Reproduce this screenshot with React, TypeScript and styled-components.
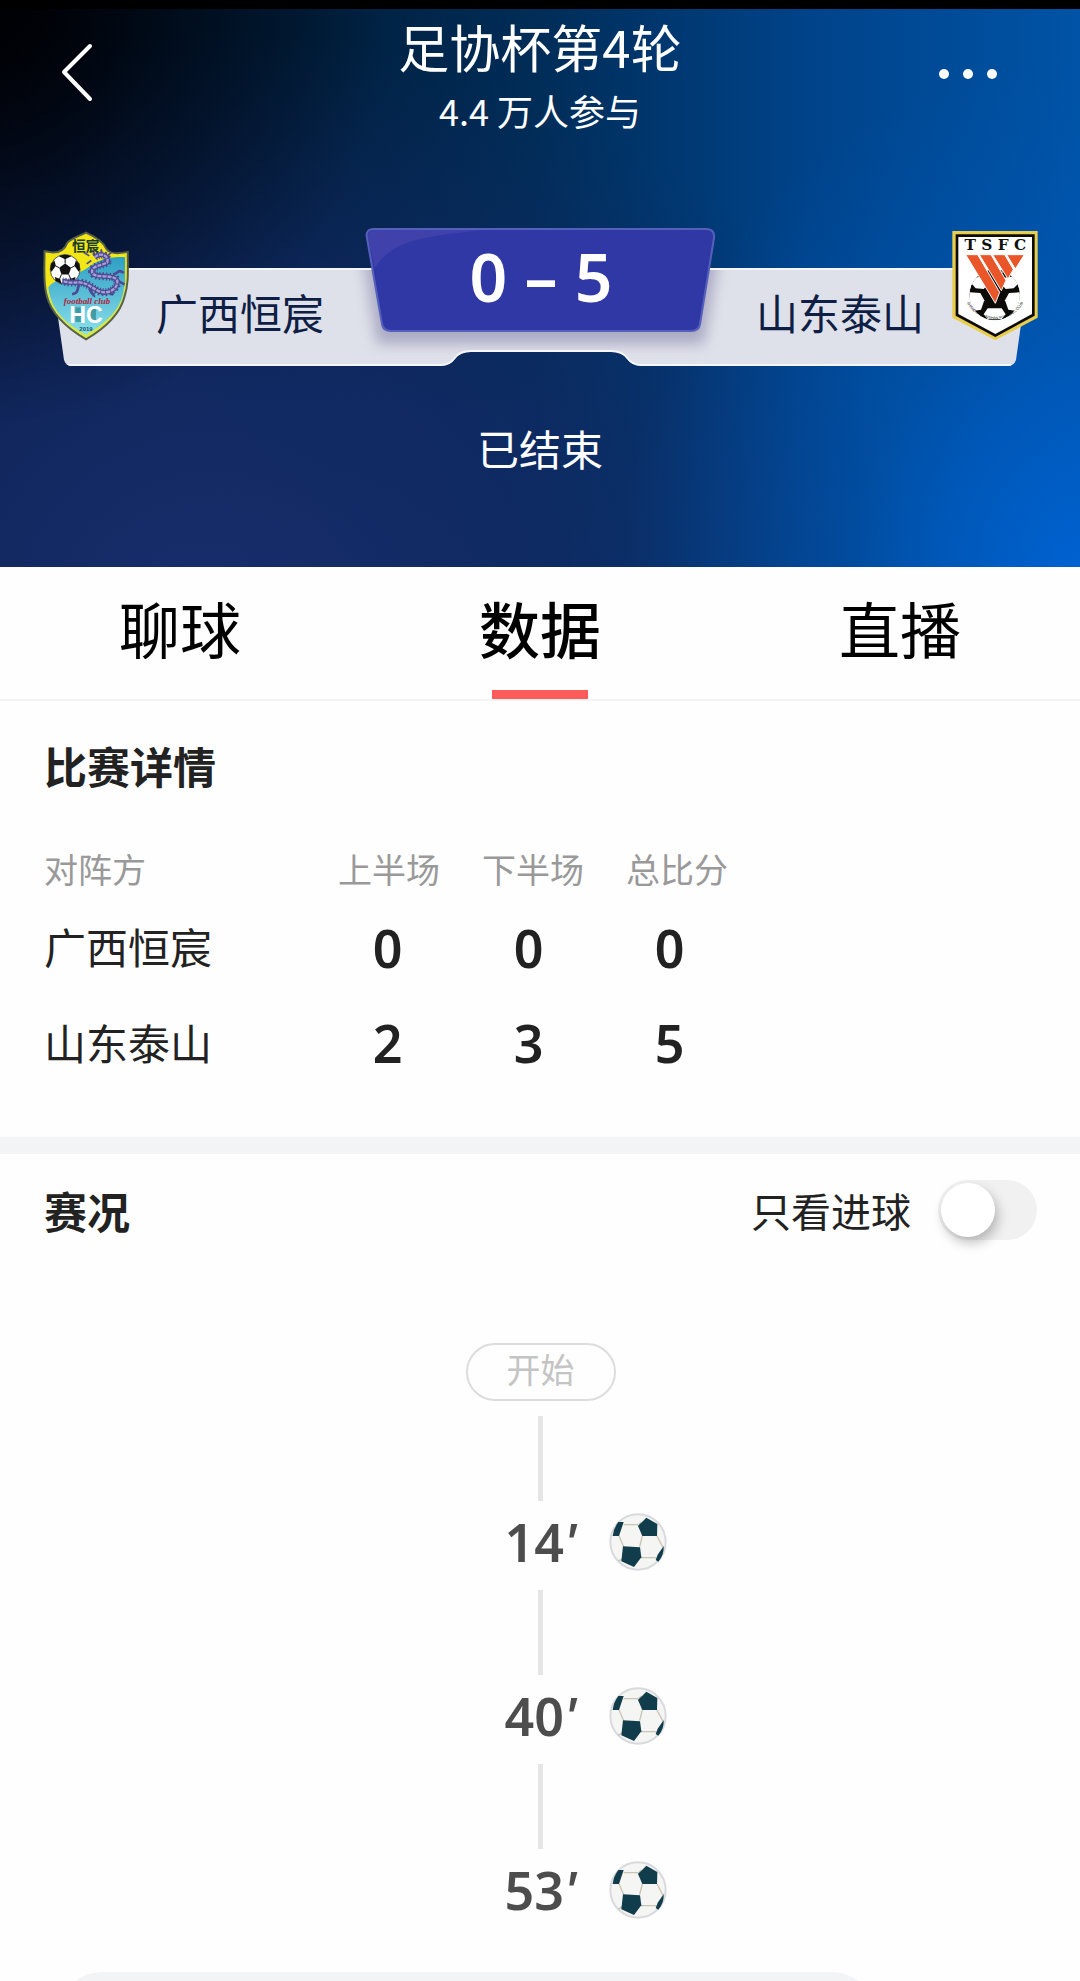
import React, { useState } from 'react'
import styled, { createGlobalStyle } from 'styled-components'

const tabs = ['聊球', '数据', '直播']

const scores = [
  { team: '广西恒宸', points: [0, 0, 0] },
  { team: '山东泰山', points: [2, 3, 5] },
]

const goals = ['14', '40', '53']

const HomeCrest = () => (
  <CrestSvg viewBox="36 33 264 332" role="img" aria-label="广西恒宸">
    <defs>
      <clipPath id="homeShield">
        <path d="M168 38 C146 48 122 56 112 68 C106 84 94 98 68 98 L43 94 C43 150 38 190 50 230 C64 284 110 326 168 360 C226 326 270 286 284 232 C298 190 294 150 294 96 C276 100 242 104 230 88 C222 64 190 48 168 38 Z" />
      </clipPath>
      <linearGradient id="homeSky" x1="0" y1="0" x2="0" y2="1">
        <stop offset="0" stopColor="#2d9fc4" />
        <stop offset="1" stopColor="#8be0ea" />
      </linearGradient>
    </defs>
    <g clipPath="url(#homeShield)">
      <rect x="36" y="33" width="264" height="332" fill="#f3e616" />
      <path d="M54 204 C70 176 140 170 176 142 C206 118 246 108 286 112 L286 200 C280 270 220 318 168 346 C110 314 62 280 54 204 Z" fill="url(#homeSky)" />
      <path d="M50 206 C60 280 110 320 168 352 C228 320 284 270 287 200" fill="none" stroke="#d4e84a" strokeWidth="8" />
    </g>
    <path d="M168 38 C146 48 122 56 112 68 C106 84 94 98 68 98 L43 94 C43 150 38 190 50 230 C64 284 110 326 168 360 C226 326 270 286 284 232 C298 190 294 150 294 96 C276 100 242 104 230 88 C222 64 190 48 168 38 Z" fill="none" stroke="#57614a" strokeWidth="6" />
    <circle cx="105" cy="149" r="45" fill="#fff" stroke="#111" strokeWidth="2" />
    <g fill="#111">
      <path d="M105 131 L123 144 L116 164 L94 164 L87 144 Z" />
      <path d="M86 109 Q105 100 124 109 L105 118 Z" />
      <path d="M62 132 L73 122 L77 138 L64 156 L60 150 Z" />
      <path d="M148 132 L137 122 L133 138 L146 156 L150 150 Z" />
      <path d="M76 184 L74 172 L90 178 L94 192 Z" />
      <path d="M134 184 L136 172 L120 178 L116 192 Z" />
    </g>
    <path d="M105 131 L105 116 M123 144 L134 138 M116 164 L122 178 M94 164 L88 178 M87 144 L76 138" stroke="#111" strokeWidth="3" />
    <g fill="none" stroke="#4d4a93" strokeLinejoin="round">
      <path d="M194 112 C214 96 238 108 232 128 C214 138 186 138 186 156 C190 180 250 160 262 182 C266 208 236 224 210 216 C188 208 176 190 148 188 C126 190 112 188 96 184" strokeWidth="24" strokeDasharray="4 6" />
      <path d="M194 112 C214 96 238 108 232 128 C214 138 186 138 186 156 C190 180 250 160 262 182 C266 208 236 224 210 216 C188 208 176 190 148 188 C126 190 112 188 96 184" strokeWidth="15" />
      <path d="M150 190 C138 206 150 220 126 224 M180 204 C176 220 196 224 192 232 M250 164 C268 160 264 146 282 160 M262 182 L284 194 M236 214 L250 226" strokeWidth="8" />
      <path d="M178 108 L162 98 M196 106 L188 90 M214 102 L214 88 M232 108 L244 98 M228 128 L244 132 M184 122 L170 132" strokeWidth="5" />
    </g>
    <path d="M194 112 C214 96 238 108 232 128 C214 138 186 138 186 156 C190 180 250 160 262 182 C266 208 236 224 210 216 C188 208 176 190 148 188 C126 190 112 188 96 184" fill="none" stroke="#a79fd6" strokeWidth="7" strokeDasharray="12 3" />
    <CrestText x="167" y="92" size={41} weight={700} fill="#163a26" family="'Noto Sans CJK SC', sans-serif">恒宸</CrestText>
    <CrestText x="171" y="254" size={27} weight={700} fill="#b3243c" slant family="'Liberation Serif', serif">football club</CrestText>
    <path d="M136 264 H154 V308 H136 Z M178 268 H198 V306 H178 Z" fill="#1e7a7e" opacity="0.6" />
    <CrestText x="168" y="312" size={70} weight={700} fill="#fff" family="'Liberation Sans', sans-serif">HC</CrestText>
    <CrestText x="168" y="336" size={18} weight={700} fill="#11556e" family="'Liberation Sans', sans-serif">2019</CrestText>
  </CrestSvg>
)

const AwayCrest = () => (
  <CrestSvg viewBox="36 32 256 330" role="img" aria-label="山东泰山">
    <defs>
      <clipPath id="awayBall">
        <circle cx="163" cy="224" r="76" />
      </clipPath>
      <path id="awayArc" d="M72 228 A94 86 0 0 0 256 228" />
    </defs>
    <path d="M36 32 H292 V292 L165 360 L36 292 Z" fill="#e9cd4c" />
    <path d="M46 42 H283 V286 L165 350 L46 286 Z" fill="#0d0b08" />
    <path d="M54 50 H275 V281 L165 341 L54 281 Z" fill="#fff" />
    <g clipPath="url(#awayBall)">
      <circle cx="163" cy="224" r="76" fill="#0d0b08" />
      <g fill="#fff">
        <path d="M106 172 L136 164 L144 190 L130 206 L106 204 L94 190 Z" />
        <path d="M192 172 L222 168 L234 190 L220 204 L196 206 L182 190 Z" />
        <path d="M88 216 L120 218 L132 240 L122 268 L98 272 L84 250 Z" />
        <path d="M206 218 L238 216 L242 250 L228 272 L204 268 L194 240 Z" />
        <path d="M142 264 L184 264 L196 282 L184 297 L142 297 L130 282 Z" />
        <path d="M132 154 L163 148 L190 154 L178 162 L150 162 Z" />
      </g>
    </g>
    <path d="M142 150 L184 150 L188 204 L166 248 L136 204 Z" fill="#0d0b08" />
    <g fill="#e8562a" stroke="#fff" strokeWidth="3">
      <path d="M76 103 H112 L178 216 L165 249 Z" />
      <path d="M117 103 H152 L197 180 L183 211 Z" />
      <path d="M157 103 H193 L219 147 L203 176 Z" />
      <path d="M199 103 H252 L225 146 Z" />
    </g>
    <CrestText x="165" y="89" size={46} weight={700} fill="#10100e" family="'DejaVu Serif', serif">T S F C</CrestText>
    <ArcText>
      <textPath href="#awayArc" startOffset="50%" textAnchor="middle">SHANDONG TAISHAN FOOTBALL CLUB</textPath>
    </ArcText>
  </CrestSvg>
)

const Football = () => (
  <FootballSvg viewBox="22 35 174 174" role="img" aria-label="进球">
    <circle cx="109" cy="122" r="83" fill="#f5f6f4" stroke="#d9dadd" strokeWidth="6" />
    <path d="M66 70 H109 M52 103 L66 136 M122 104 L114 136 M166 104 L184 138 M118 169 H164 M50 180 L62 172 M109 74 L118 62" fill="none" stroke="#c9c5b4" strokeWidth="4" />
    <g fill="#103c4c">
      <path d="M134 49 L167 68 L166 104 L122 104 L109 74 Z" />
      <path d="M64 135 L115 138 L119 168 L97 197 L59 180 Z" />
      <path d="M50 62 L66 62 L52 104 L33 104 Q36 80 50 62 Z" />
      <path d="M186 134 Q188 160 170 181 L162 176 L168 160 Z" />
    </g>
  </FootballSvg>
)

const App = () => {
  const [active, setActive] = useState('数据')
  const [onlyGoals, setOnlyGoals] = useState(false)

  return (
    <Page>
      <GlobalStyle />
      <Header>
        <TopBar>
          <BackButton type="button" aria-label="返回">
            <svg width="32" height="60" viewBox="0 0 32 60">
              <path d="M29 3 L3 29 L29 56" fill="none" stroke="#fff" strokeWidth="4" strokeLinecap="round" strokeLinejoin="round" />
            </svg>
          </BackButton>
          <Heading>
            <Title>足协杯第4轮</Title>
            <Joined>4.4 万人参与</Joined>
          </Heading>
          <MoreButton type="button" aria-label="更多">
            <Dot />
            <Dot />
            <Dot />
          </MoreButton>
        </TopBar>
        <Board>
          <BoardShape viewBox="0 0 996 160" preserveAspectRatio="none" aria-hidden="true">
            <defs>
              <filter id="plateShadow" x="-10%" y="-20%" width="120%" height="150%">
                <feGaussianBlur stdDeviation="7" />
              </filter>
              <clipPath id="panelClip">
                <path d="M9 40 H987 L974 132 Q972 138 965 138 H599 Q590 138 585 131 Q580 124 569 124 H429 Q418 124 413 131 Q408 138 399 138 H30 Q24 138 22 132 Z" />
              </clipPath>
            </defs>
            <g clipPath="url(#panelClip)">
              <rect x="0" y="40" width="996" height="98" fill="#dfe1ea" />
              <path d="M318 10 H680 L662 116 H335 Z" fill="#77739f" opacity="0.5" filter="url(#plateShadow)" />
              <path d="M0 41 H996 M22 137 H399 Q408 137 413 130 Q418 123 429 123 H569 Q580 123 585 130 Q590 137 599 137 H970" fill="none" stroke="#f4f6fb" strokeWidth="2" />
            </g>
            <path d="M332 1 H664 Q673 1 672 10 L658 96 Q657 103 649 103 H349 Q341 103 340 96 L325 10 Q323 1 332 1 Z" fill="#3038a5" stroke="#5560bb" strokeWidth="2" />
            <path d="M332 2 H440 C390 8 350 10 333 40 L326 10 Q325 2 332 2 Z" fill="#4746ae" opacity="0.7" />
          </BoardShape>
          <HomeCrest />
          <TeamName>广西恒宸</TeamName>
          <Score>0 – 5</Score>
          <TeamName right>山东泰山</TeamName>
          <AwayCrest />
        </Board>
        <Status>已结束</Status>
      </Header>

      <Tabs>
        {tabs.map(tab => (
          <Tab key={tab} type="button" $active={tab === active} onClick={() => setActive(tab)}>
            {tab}
          </Tab>
        ))}
      </Tabs>

      <Detail>
        <SectionTitle>比赛详情</SectionTitle>
        <ScoreTable>
          <thead>
            <HeadRow>
              <th>对阵方</th>
              <th>上半场</th>
              <th>下半场</th>
              <th>总比分</th>
            </HeadRow>
          </thead>
          <tbody>
            {scores.map(row => (
              <ScoreRow key={row.team}>
                <th>{row.team}</th>
                {row.points.map((point, i) => (
                  <td key={i}>{point}</td>
                ))}
              </ScoreRow>
            ))}
          </tbody>
        </ScoreTable>
      </Detail>

      <Events>
        <EventsHead>
          <SectionTitle>赛况</SectionTitle>
          <SwitchLabel>
            只看进球
            <Switch
              type="checkbox"
              checked={onlyGoals}
              onChange={e => setOnlyGoals(e.target.checked)}
            />
          </SwitchLabel>
        </EventsHead>
        <Timeline>
          <StartPill>开始</StartPill>
          {goals.map(minute => (
            <Goal key={minute}>
              <Line />
              <GoalRow>
                <Minute>
                  {minute}
                  <i>'</i>
                </Minute>
                <Football />
              </GoalRow>
            </Goal>
          ))}
        </Timeline>
      </Events>
      <Footer>
        <CommentBar />
      </Footer>
    </Page>
  )
}

export default App

const GlobalStyle = createGlobalStyle`
  * {
    box-sizing: border-box;
  }
  body {
    margin: 0;
    background-color: #fefefe;
    color: #222222;
    font-family: 'Noto Sans CJK SC', sans-serif;
  }
  button {
    padding: 0;
    border: 0;
    background: none;
    font-family: inherit;
    cursor: pointer;
  }
`

const Page = styled.div`
  display: flex;
  flex-direction: column;
`

const Header = styled.header`
  display: flex;
  flex-direction: column;
  height: 567px;
  border-top: 9px solid #000;
  color: #fff;
  background-image: radial-gradient(ellipse 36% 75% at 0% 0%, #000003 0%, rgba(0, 4, 12, 0.5) 45%, rgba(0, 10, 30, 0) 100%),
    radial-gradient(ellipse 42% 90% at 100% 100%, #0061d0 0%, rgba(0, 88, 185, 0.45) 50%, rgba(0, 84, 176, 0) 100%),
    radial-gradient(ellipse 68% 100% at 18% 105%, #182e6c 0%, rgba(18, 42, 102, 0.85) 45%, rgba(8, 40, 96, 0) 100%),
    linear-gradient(to right, #000816 0%, #001a34 22%, #002d58 50%, #00438a 75%, #0053a6 100%);
  background-origin: border-box;
`

const TopBar = styled.div`
  display: grid;
  grid-template-columns: 1fr auto 1fr;
  height: 130px;
  padding: 6px 61px 0;
`

const BackButton = styled.button`
  width: 60px;
  height: 120px;
  text-align: left;
`

const Heading = styled.div`
  display: flex;
  flex-direction: column;
  align-items: center;
`

const Title = styled.h1`
  margin: 0;
  font-size: 51px;
  font-weight: 400;
  line-height: 62px;
`

const Joined = styled.p`
  margin: 0;
  font-size: 36px;
  line-height: 66px;
`

const MoreButton = styled.button`
  display: flex;
  align-items: center;
  justify-content: flex-end;
  justify-self: end;
  gap: 14px;
  width: 82px;
  height: 118px;
  padding-right: 22px;
`

const Dot = styled.span`
  width: 10px;
  height: 10px;
  border-radius: 50%;
  background-color: #fff;
`

const Board = styled.div`
  position: relative;
  display: grid;
  grid-template-columns: 88px 1fr 348px 1fr 86px;
  height: 138px;
  margin: 89px 42px 0;
`

const BoardShape = styled.svg`
  position: absolute;
  top: 0;
  left: 0;
  width: 100%;
  height: 160px;
`

const CrestSvg = styled.svg`
  position: relative;
  width: 100%;
  height: 110px;
  margin-top: 3px;
`

const CrestText = styled.text.withConfig({
  shouldForwardProp: prop => !['size', 'weight', 'family', 'slant'].includes(prop),
})<{ size: number; weight: number; family: string; slant?: boolean }>`
  font-family: ${props => props.family};
  font-size: ${props => props.size}px;
  font-weight: ${props => props.weight};
  font-style: ${props => (props.slant ? 'italic' : 'normal')};
  text-anchor: middle;
`

const ArcText = styled.text`
  font-family: 'Liberation Sans', sans-serif;
  font-size: 11px;
  fill: #10100e;
`

const TeamName = styled.div.withConfig({
  shouldForwardProp: prop => prop !== 'right',
})<{ right?: boolean }>`
  position: relative;
  padding: 54px 28px 0 26px;
  color: #0f1e44;
  font-size: 42px;
  line-height: 60px;
  text-align: ${props => (props.right ? 'right' : 'left')};
  white-space: nowrap;
`

const Score = styled.div`
  position: relative;
  font-family: 'Noto Sans', sans-serif;
  font-size: 66px;
  font-weight: 600;
  line-height: 96px;
  text-align: center;
`

const Status = styled.p`
  margin: 52px 0 0;
  font-size: 42px;
  line-height: 60px;
  text-align: center;
`

const Tabs = styled.nav`
  display: grid;
  grid-template-columns: repeat(3, 1fr);
  height: 134px;
  border-bottom: 2px solid #f3f3f3;
`

const Tab = styled.button<{ $active: boolean }>`
  display: flex;
  flex-direction: column;
  align-items: center;
  justify-content: space-between;
  color: #000;
  font-size: 61px;
  font-weight: ${props => (props.$active ? 500 : 400)};
  line-height: 122px;

  &::after {
    content: '';
    width: 96px;
    height: 9px;
    background-color: ${props => (props.$active ? '#fc5b5a' : 'transparent')};
  }
`

const Detail = styled.section`
  padding: 34px 44px 51px;
  border-bottom: 17px solid #f3f4f6;
`

const SectionTitle = styled.h2`
  margin: 0;
  font-size: 43px;
  font-weight: 600;
  line-height: 60px;
`

const ScoreTable = styled.table`
  display: block;
  margin-top: 48px;
  border-spacing: 0;
  th {
    padding: 0;
    font-weight: 400;
  }
  th:first-child {
    text-align: left;
  }
`

const HeadRow = styled.tr`
  display: grid;
  grid-template-columns: 273px repeat(3, 144px);
  color: #999999;
  font-size: 34px;
  line-height: 52px;
`

const ScoreRow = styled.tr`
  display: grid;
  grid-template-columns: 273px repeat(3, 141px);
  padding-top: 8px;
  font-size: 42px;
  line-height: 85px;
  td {
    padding: 1px 0 0;
    font-family: 'Noto Sans', sans-serif;
    font-size: 52px;
    font-weight: 600;
    line-height: 87px;
    text-align: center;
  }
  &:last-child td {
    padding: 0;
  }
`

const Events = styled.section`
  padding: 26px 43px 0 44px;
`

const EventsHead = styled.div`
  display: flex;
  align-items: center;
  justify-content: space-between;
`

const SwitchLabel = styled.label`
  display: flex;
  align-items: center;
  gap: 27px;
  font-size: 40px;
  line-height: 60px;
`

const Switch = styled.input`
  appearance: none;
  display: flex;
  align-items: center;
  width: 99px;
  height: 60px;
  margin: 0;
  padding: 0 3px;
  border-radius: 30px;
  background-color: #f1f1f1;
  cursor: pointer;

  &::before {
    content: '';
    width: 54px;
    height: 54px;
    border-radius: 50%;
    background-color: #fff;
    box-shadow: 3px 6px 12px rgba(0, 0, 0, 0.25);
  }
  &:checked {
    justify-content: flex-end;
    background-color: #fc5b5a;
  }
`

const Timeline = styled.ol`
  display: flex;
  flex-direction: column;
  align-items: center;
  margin: 103px 0 0;
  padding: 0;
  list-style: none;
`

const StartPill = styled.li`
  width: 150px;
  height: 58px;
  margin-bottom: 8px;
  border: 2px solid #dddddd;
  border-radius: 29px;
  color: #c4c4c4;
  font-size: 34px;
  line-height: 48px;
  text-align: center;
`

const Goal = styled.li`
  display: flex;
  flex-direction: column;
  align-items: center;
  width: 100%;
  padding-top: 7px;
`

const Line = styled.span`
  width: 5px;
  height: 85px;
  background-color: #e5e5e5;
`

const GoalRow = styled.div`
  display: grid;
  grid-template-columns: 1fr 76px 1fr;
  align-items: center;
  column-gap: 30px;
  width: 100%;
  height: 82px;
  &::before {
    content: '';
  }
`

const Minute = styled.span`
  color: #4d4d4d;
  font-family: 'Noto Sans', sans-serif;
  font-size: 52px;
  font-weight: 600;
  line-height: 80px;
  text-align: center;
  white-space: nowrap;
`

const FootballSvg = styled.svg`
  width: 58px;
  height: 58px;
`

const Footer = styled.footer`
  height: 9px;
  margin-top: 41px;
  padding: 0 201px 0 55px;
  overflow: hidden;
`

const CommentBar = styled.div`
  height: 96px;
  border-radius: 48px;
  background-color: #f3f4f6;
`
